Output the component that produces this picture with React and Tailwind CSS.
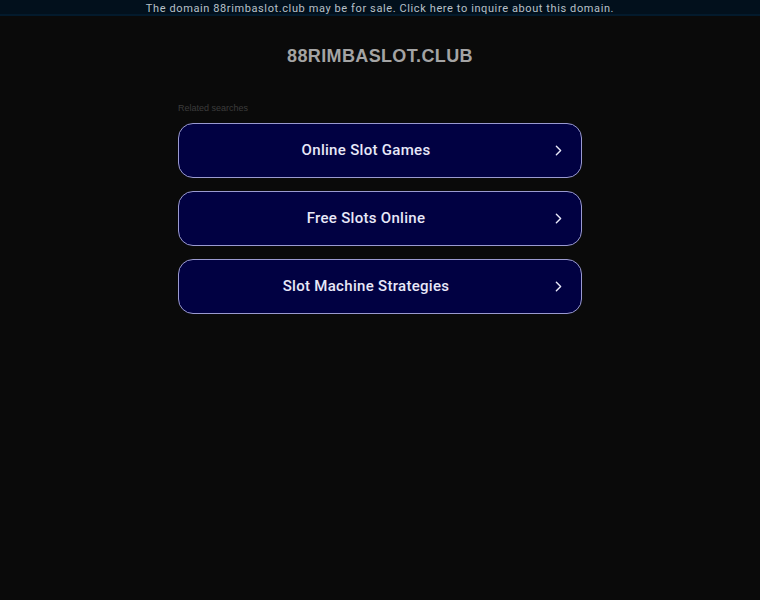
import { ChevronRight } from "lucide-react"

const searches = ["Online Slot Games", "Free Slots Online", "Slot Machine Strategies"]

function SearchLink({ label }) {
    return (
        <a
            href="#"
            className="flex h-[55px] items-center rounded-[15px] border border-[#9a9ad0] bg-[#010142] pl-[3px] pr-[14px] text-[#e8e8f8]"
        >
            <span className="flex-1 text-center font-['Roboto',sans-serif] text-[15px] font-medium tracking-[0.02em]">{label}</span>
            <ChevronRight className="h-[17px] w-[17px]" strokeWidth={2} />
        </a>
    )
}

export default function App() {
    return (
        <div className="min-h-[600px] bg-[#0a0a0a] font-['Liberation_Sans',Arial,sans-serif]">
            <div className="flex h-[16px] items-center justify-center border-b-2 border-[#031a2c] bg-[#02101c] pt-[2px] font-['Roboto',sans-serif] text-[11px] leading-none tracking-[0.055em] text-[#b8c0c8]">
                The domain 88rimbaslot.club may be for sale. Click here to inquire about this domain.
            </div>
            <h1 className="mt-[27px] text-center text-[18px] font-bold tracking-[0.02em] text-[#a4a4a4]">
                88RIMBASLOT.CLUB
            </h1>
            <div className="mx-auto mt-[32px] w-[404px]">
                <p className="text-[9px] text-[#3c3c3c]">Related searches</p>
                <div className="mt-[7px] flex flex-col gap-[13px]">
                    {searches.map(s => (
                        <SearchLink key={s} label={s} />
                    ))}
                </div>
            </div>
        </div>
    )
}
